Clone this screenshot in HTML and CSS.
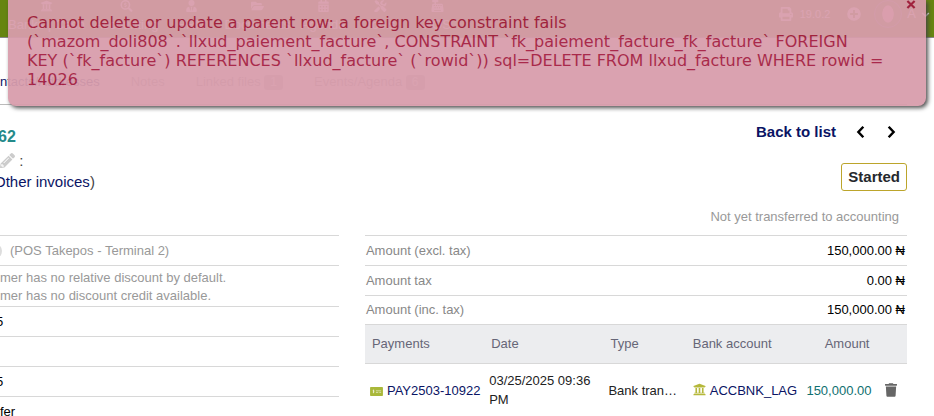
FILE: index.html
```
<!DOCTYPE html>
<html lang="en">
<head>
  <meta charset="UTF-8">
  <meta name="viewport" content="width=device-width, initial-scale=1.0">
  <title>Invoice</title>
  <link rel="stylesheet" href="styles.css">
</head>
<body>

  <!-- Icons used on the page -->
  <svg class="sprite" aria-hidden="true">
    <symbol id="bank" viewBox="0 0 512 512"><path d="M496 128v16a8 8 0 0 1-8 8h-24v12c0 6.600-5.400 12-12 12H60c-6.600 0-12-5.400-12-12v-12H24a8 8 0 0 1-8-8v-16a8 8 0 0 1 5-7.400l232-88a8 8 0 0 1 6 0l232 88a8 8 0 0 1 5 7.400zm-24 304H40c-13.300 0-24 10.700-24 24v16a8 8 0 0 0 8 8h464a8 8 0 0 0 8-8v-16c0-13.300-10.700-24-24-24zM96 192v192H60c-6.600 0-12 5.400-12 12v20h416v-20c0-6.600-5.400-12-12-12h-36V192h-64v192h-64V192h-64v192h-64V192H96z"/></symbol>
    <symbol id="search" viewBox="0 0 512 512"><path fill-rule="evenodd" d="M505 442L405 342c-4-4-10-7-17-7h-16a208 208 0 1 0-37 37v16c0 7 3 13 7 17l100 100c9 9 24 9 34 0l28-28c10-10 10-25 1-35zM208 64a144 144 0 1 1 0 288 144 144 0 0 1 0-288zm-16 40v22c-52 10-58 78-8 94l38 12c14 5 10 22-3 22h-24c-8 0-15-4-22-9l-22 24c10 8 20 13 41 14v22h32v-22c56-8 60-78 10-94l-40-12c-13-5-9-21 4-21h24c8 0 14 3 20 7l23-23c-11-8-22-13-41-14v-22h-32z"/></symbol>
    <symbol id="user" viewBox="0 0 448 512"><path d="M224 256a128 128 0 1 0 0-256 128 128 0 0 0 0 256zm96 33l-48 191-32-136 32-56h-96l32 56-32 136-48-191C57 292 0 351 0 422v42c0 27 21 48 48 48h352c27 0 48-21 48-48v-42c0-71-57-130-128-133z"/></symbol>
    <symbol id="folder" viewBox="0 0 576 512"><path d="M573 292L500 416c-12 20-39 32-62 32H45c-19 0-30-20-21-36l73-124c12-20 39-32 62-32h393c18 0 30 20 21 36zM152 224h328v-48c0-27-21-48-48-48H272l-64-64H48C21 64 0 85 0 112v278l70-118c17-29 49-48 82-48z"/></symbol>
    <symbol id="calendar" viewBox="0 0 448 512"><path fill-rule="evenodd" d="M0 464c0 27 21 48 48 48h352c27 0 48-21 48-48V192H0v272zM64 256h64v64H64v-64zm128 0h64v64h-64v-64zm128 0h64v64h-64v-64zM64 384h64v64H64v-64zm128 0h64v64h-64v-64zm128 0h64v64h-64v-64zM400 64h-48V0h-64v64H160V0H96v64H48c-27 0-48 21-48 48v48h448v-48c0-27-21-48-48-48z"/></symbol>
    <symbol id="tools" viewBox="0 0 512 512"><path d="M501 395L384 278c-23-23-57-27-84-13L192 158V96L64 0 0 64l96 128h62l107 107c-14 28-10 62 13 85l117 117c15 15 38 15 53 0l53-53c14-15 14-39 0-53zM332 225c28 0 55 11 75 31l19 19a151 151 0 0 0 82-159c-2-10-14-13-21-6l-74 74-68-11-11-68 74-74c7-7 4-20-6-21-92-23-164 48-162 147l85 85 7-17zM228 330l-57-57L19 426a64 64 0 1 0 90 90l122-122c-9-20-8-43-3-64z"/></symbol>
    <symbol id="register" viewBox="0 0 512 512"><path fill-rule="evenodd" d="M511 379l-32-192c-4-16-17-27-32-27H192V96h80c9 0 16-7 16-16V16c0-9-7-16-16-16H48c-9 0-16 7-16 16v64c0 9 7 16 16 16h80v64H64c-15 0-28 11-31 27L1 379c-1 4-1 6-1 9v92c0 18 14 32 32 32h448c18 0 32-14 32-32v-92c0-3 0-5-1-9zM96 208h48v48H96v-48zm32 96h48v48h-48v-48zm64-96h48v48h-48v-48zm32 96h48v48h-48v-48zm64-96h48v48h-48v-48zm32 96h48v48h-48v-48zm64-96h48v48h-48v-48zM112 432h288v32H112v-32z"/></symbol>
    <symbol id="print" viewBox="0 0 512 512"><path fill-rule="evenodd" d="M448 192V77c0-8-3-16-9-22L393 9c-6-6-14-9-22-9H96C78 0 64 14 64 32v160c-35 0-64 29-64 64v112c0 9 7 16 16 16h48v96c0 18 14 32 32 32h320c18 0 32-14 32-32v-96h48c9 0 16-7 16-16V256c0-35-29-64-64-64zm-64 256H128v-96h256v96zm0-224H128V64h192v48c0 9 7 16 16 16h48v96zm48 72a24 24 0 1 1 0-48 24 24 0 0 1 0 48z"/></symbol>
    <symbol id="plus" viewBox="0 0 512 512"><path fill-rule="evenodd" d="M256 8a248 248 0 1 0 0 496 248 248 0 0 0 0-496zm144 284H292v108h-72V292H112v-72h108V112h72v108h108v72z"/></symbol>
    <symbol id="down" viewBox="0 0 512 512"><path d="M70 170l186 186 186-186" fill="none" stroke="currentColor" stroke-width="85"/></symbol>
    <symbol id="pencil" viewBox="0 0 512 512"><path d="M498 142l-46 46c-5 5-13 5-17 0L324 77c-5-5-5-12 0-17l46-46c19-19 49-19 68 0l60 60c19 19 19 49 0 68zM284 100L22 362 0 486c-3 16 12 30 28 28l124-22 262-262c5-5 5-12 0-17L302 100c-5-5-13-5-18 0zM124 340c-5-6-5-14 0-19l154-154c5-5 13-5 19 0s5 14 0 19L143 340c-5 5-13 5-19 0zm-36 84h48v36l-64 11-31-31 11-64h36v48z" fill-rule="evenodd"/></symbol>
    <symbol id="left" viewBox="0 0 320 512"><path d="M245 65L65 256l180 191" fill="none" stroke="currentColor" stroke-width="90"/></symbol>
    <symbol id="right" viewBox="0 0 320 512"><path d="M75 65l180 191L75 447" fill="none" stroke="currentColor" stroke-width="90"/></symbol>
    <symbol id="cheque" viewBox="0 0 640 448"><path d="M0 416c0 18 14 32 32 32h576c18 0 32-14 32-32V96H0v320zM608 0H32C14 0 0 14 0 32v80h640V32c0-18-14-32-32-32z"/><path d="M208 168c-60-25-86 36-36 50 62 15 42 73-36 45M172 130v180M290 190h260M290 272h120M460 272h90" fill="none" stroke="#fff" stroke-width="26"/></symbol>
    <symbol id="trash" viewBox="0 0 448 512"><path d="M432 32H312l-9-19C298 5 290 0 281 0H167c-9 0-17 5-22 13l-9 19H16C7 32 0 39 0 48v32c0 9 7 16 16 16h416c9 0 16-7 16-16V48c0-9-7-16-16-16zM53 467c2 25 23 45 48 45h246c25 0 46-20 48-45l21-339H32l21 339z"/></symbol>
    <symbol id="cross" viewBox="0 0 10 10"><path d="M1 1l8 8M9 1L1 9" fill="none" stroke="currentColor" stroke-width="2.400"/></symbol>
  </svg>

  <header class="topbar">
    <nav class="menu">
      <a href="#"><svg class="icon"><use href="#bank"/></svg>Banks | Cash</a>
      <a href="#"><svg class="icon"><use href="#search"/></svg>Accounting</a>
      <a href="#"><svg class="icon"><use href="#user"/></svg>HRM</a>
      <a href="#"><svg class="icon"><use href="#folder"/></svg>Documents</a>
      <a href="#"><svg class="icon"><use href="#calendar"/></svg>Agenda</a>
      <a href="#"><svg class="icon"><use href="#tools"/></svg>Tools</a>
      <a href="#"><svg class="icon"><use href="#register"/></svg>POS</a>
    </nav>
    <div class="login">
      <svg class="icon-top"><use href="#print"/></svg>
      <span class="version">19.0.2</span>
      <svg class="icon-top"><use href="#plus"/></svg>
      <span class="avatar"></span>
      <span>A</span>
      <svg class="caret"><use href="#down"/></svg>
    </div>
  </header>

  <!-- Error message -->
  <div class="alert" role="alert">
    <button class="alert-close" aria-label="Close"><svg><use href="#cross"/></svg></button>
    <p>Cannot delete or update a parent row: a foreign key constraint fails (`mazom_doli808`.`llxud_paiement_facture`, CONSTRAINT `fk_paiement_facture_fk_facture` FOREIGN<br>KEY (`fk_facture`) REFERENCES `llxud_facture` (`rowid`)) sql=DELETE FROM llxud_facture WHERE rowid = 14026</p>
  </div>

  <main class="content">
    <nav class="tabs">
      <a class="current" href="#">ntacts/Addresses</a>
      <a href="#">Notes</a>
      <a href="#">Linked files <span class="badge">1</span></a>
      <a href="#">Events/Agenda <span class="badge">6</span></a>
    </nav>

    <section class="banner">
      <div class="ref">
        <h1>62</h1>
        <p class="ref-customer"><svg><use href="#pencil"/></svg> :</p>
        <p class="ref-links"><a href="#">Other invoices</a>)</p>
      </div>
      <div class="status">
        <div class="pagination">
          <a href="#">Back to list</a>
          <a href="#" aria-label="Previous"><svg><use href="#left"/></svg></a>
          <a href="#" aria-label="Next"><svg><use href="#right"/></svg></a>
        </div>
        <span class="status-badge">Started</span>
        <p class="transfer">Not yet transferred to accounting</p>
      </div>
    </section>

    <div class="columns">
      <table class="fields">
        <tr><td class="muted"><div class="pos"><span class="dot"></span>(POS Takepos - Terminal 2)</div></td></tr>
        <tr><td class="muted discount">mer has no relative discount by default.<br>mer has no discount credit available.</td></tr>
        <tr><td class="cut">5</td></tr>
        <tr><td></td></tr>
        <tr><td class="cut">5</td></tr>
        <tr><td>fer</td></tr>
      </table>

      <div>
        <table class="totals">
          <tr><th>Amount (excl. tax)</th><td>150,000.00 ₦</td></tr>
          <tr><th>Amount tax</th><td>0.00 ₦</td></tr>
          <tr class="total"><th>Amount (inc. tax)</th><td>150,000.00 ₦</td></tr>
        </table>
        <table class="payments">
          <thead>
            <tr>
              <th class="col-ref">Payments</th>
              <th class="col-date">Date</th>
              <th class="col-type">Type</th>
              <th class="col-bank">Bank account</th>
              <th class="col-amount">Amount</th>
              <th class="col-action"></th>
            </tr>
          </thead>
          <tbody>
            <tr>
              <td><a href="#"><svg class="cheque"><use href="#cheque"/></svg>PAY2503-10922</a></td>
              <td>03/25/2025 09:36 PM</td>
              <td class="ellipsis">Bank transfer</td>
              <td class="col-bank"><a href="#"><svg class="bank"><use href="#bank"/></svg>ACCBNK_LAG</a></td>
              <td class="col-amount amount">150,000.00</td>
              <td class="col-action"><a href="#" aria-label="Delete"><svg class="trash"><use href="#trash"/></svg></a></td>
            </tr>
          </tbody>
        </table>
      </div>
    </div>
  </main>

</body>
</html>
```
FILE: styles.css
```
* {
  margin: 0;
  padding: 0;
  box-sizing: border-box;
}

html {
  overflow: hidden;
}

body {
  font-family: "Liberation Sans", Arial, sans-serif;
  font-size: 13px;
  line-height: 18px;
  color: #222;
  background-color: #fff;
}

a {
  color: #0a1464;
  text-decoration: none;
}

svg {
  fill: currentColor;
}

.sprite {
  display: none;
}

/* Top menu */
.topbar {
  display: flex;
  justify-content: space-between;
  height: 38px;
  padding: 0 4px 0 8px;
  background-color: #668510;
  border-bottom: 1px solid #888;
  color: #fff;
}

.menu {
  display: flex;
  gap: 9px;
}

.menu a {
  display: flex;
  flex-direction: column;
  align-items: center;
  min-width: 48px;
  color: #fff;
}

.icon {
  width: 13px;
  height: 12px;
  margin-bottom: 4px;
}

.login {
  display: flex;
  align-items: center;
  height: 28px;
  gap: 5px;
}

.version {
  margin: 0 12px 0 2px;
  font-size: 11px;
}

.icon-top {
  width: 14px;
  height: 14px;
}

.avatar {
  width: 28px;
  height: 28px;
  margin-left: 8px;
  border-radius: 50%;
  border: 1px solid #888;
  background: radial-gradient(ellipse 6px 9px, #ffb0c0 90%, #6c8a20);
}

.caret {
  width: 9px;
  height: 9px;
}

/* Error message */
.alert {
  position: absolute;
  top: 0;
  left: 8px;
  right: 8px;
  height: 106px;
  padding: 13px 19px;
  border-radius: 0 0 8px 8px;
  background-color: #d89dac;
  box-shadow: 2px 2px 4px #444;
  opacity: 0.94;
  font-family: Verdana, "DejaVu Sans", sans-serif;
  font-size: 16px;
  line-height: 19px;
  color: #a41c40;
}

.alert-close {
  position: absolute;
  top: 0;
  right: 10px;
  border: none;
  background: none;
  color: #a41c40;
  line-height: 0;
  cursor: pointer;
}

.alert-close svg {
  width: 10px;
  height: 9px;
}

/* The card runs past the left edge of the window */
.content {
  margin: 0 27px 0 -6px;
}

.tabs {
  display: flex;
  gap: 31px;
  height: 67px;
  padding: 35px 0 0 6px;
  border-bottom: 1px solid #bbb;
}

.tabs a {
  color: #999;
}

.tabs .current {
  color: #0a1464;
}

.badge {
  display: inline-block;
  padding: 0 6px;
  border-radius: 3px;
  background-color: #bbb;
  color: #fff;
  font-size: 12px;
  line-height: 15px;
}

/* Reference and status */
.banner {
  display: flex;
  justify-content: space-between;
  height: 130px;
  font-size: 15px;
}

.ref {
  padding-top: 20px;
  color: #444;
}

.ref h1 {
  padding-left: 4px;
  font-size: 16px;
  line-height: 24px;
  color: #258a8a;
}

.ref-customer {
  padding-left: 6px;
  line-height: 24px;
}

.ref-customer svg {
  width: 15px;
  height: 15px;
  vertical-align: -2px;
  color: #ccc;
}

.ref-links {
  line-height: 18px;
}

.status {
  display: flex;
  flex-direction: column;
  align-items: flex-end;
  padding-top: 17px;
}

.pagination {
  display: flex;
  align-items: center;
  gap: 20px;
  height: 20px;
  padding-right: 11px;
  font-weight: bold;
}

.pagination svg {
  display: block;
  width: 10px;
  height: 14px;
  color: #000;
}

.status-badge {
  margin-top: 21px;
  padding: 3px 6px;
  border: 1px solid #bca52b;
  border-radius: 3px;
  line-height: 20px;
  font-weight: bold;
  color: #25282d;
}

.transfer {
  margin-top: 17px;
  padding-right: 8px;
  font-size: 13px;
  color: #999;
}

/* Invoice details */
.columns {
  display: grid;
  grid-template-columns: 7fr 11fr;
  gap: 26px;
  align-items: start;
}

table {
  width: 100%;
  border-collapse: collapse;
}

th {
  font-weight: normal;
  text-align: left;
}

.fields td,
.totals th,
.totals td {
  height: 30px;
  border-top: 1px solid #d8d8d8;
}

.fields td {
  padding-left: 6px;
  color: #000;
}

.fields .cut {
  padding-left: 2px;
}

.fields .muted {
  color: #999;
}

.fields .discount {
  height: 41px;
  padding-top: 2px;
}

.pos {
  display: flex;
  align-items: center;
  gap: 8px;
  margin-left: -14px;
}

.dot {
  width: 16px;
  height: 16px;
  border-radius: 50%;
  background-color: #ddd;
}

.totals th {
  padding-left: 1px;
  color: #888;
}

.totals td {
  padding-right: 2px;
  text-align: right;
  color: #000;
}

.totals .total th,
.totals .total td {
  height: 28px;
}

.payments {
  table-layout: fixed;
}

.payments th {
  height: 39px;
  padding-left: 7px;
  border-top: 1px solid #d8d8d8;
  border-bottom: 1px solid #d8d8d8;
  background-color: #ecedef;
  color: #666677;
}

.payments td {
  height: 54px;
  padding-left: 5px;
  line-height: 19px;
}

.payments svg {
  vertical-align: -1px;
  margin-right: 4px;
}

.col-ref,
.col-date {
  width: 22%;
}

.col-type {
  width: 15%;
}

.col-bank {
  width: 22%;
}

.payments .col-bank {
  padding-left: 8px;
}

.col-action {
  width: 6%;
}

.payments .col-amount {
  padding: 0 5px 0 0;
  text-align: right;
}

.payments .amount {
  padding-right: 3px;
  color: #0f7070;
}

.ellipsis {
  overflow: hidden;
  padding-right: 4px;
  text-overflow: ellipsis;
  white-space: nowrap;
}

.payments .col-action {
  padding: 0;
  text-align: center;
}

.cheque {
  width: 13px;
  height: 9px;
  color: #a9b83a;
}

.bank {
  width: 13px;
  height: 13px;
  color: #b5b83a;
}

.payments .trash {
  width: 12px;
  height: 14px;
  margin: 0;
  vertical-align: -2px;
  color: #666;
}
```
